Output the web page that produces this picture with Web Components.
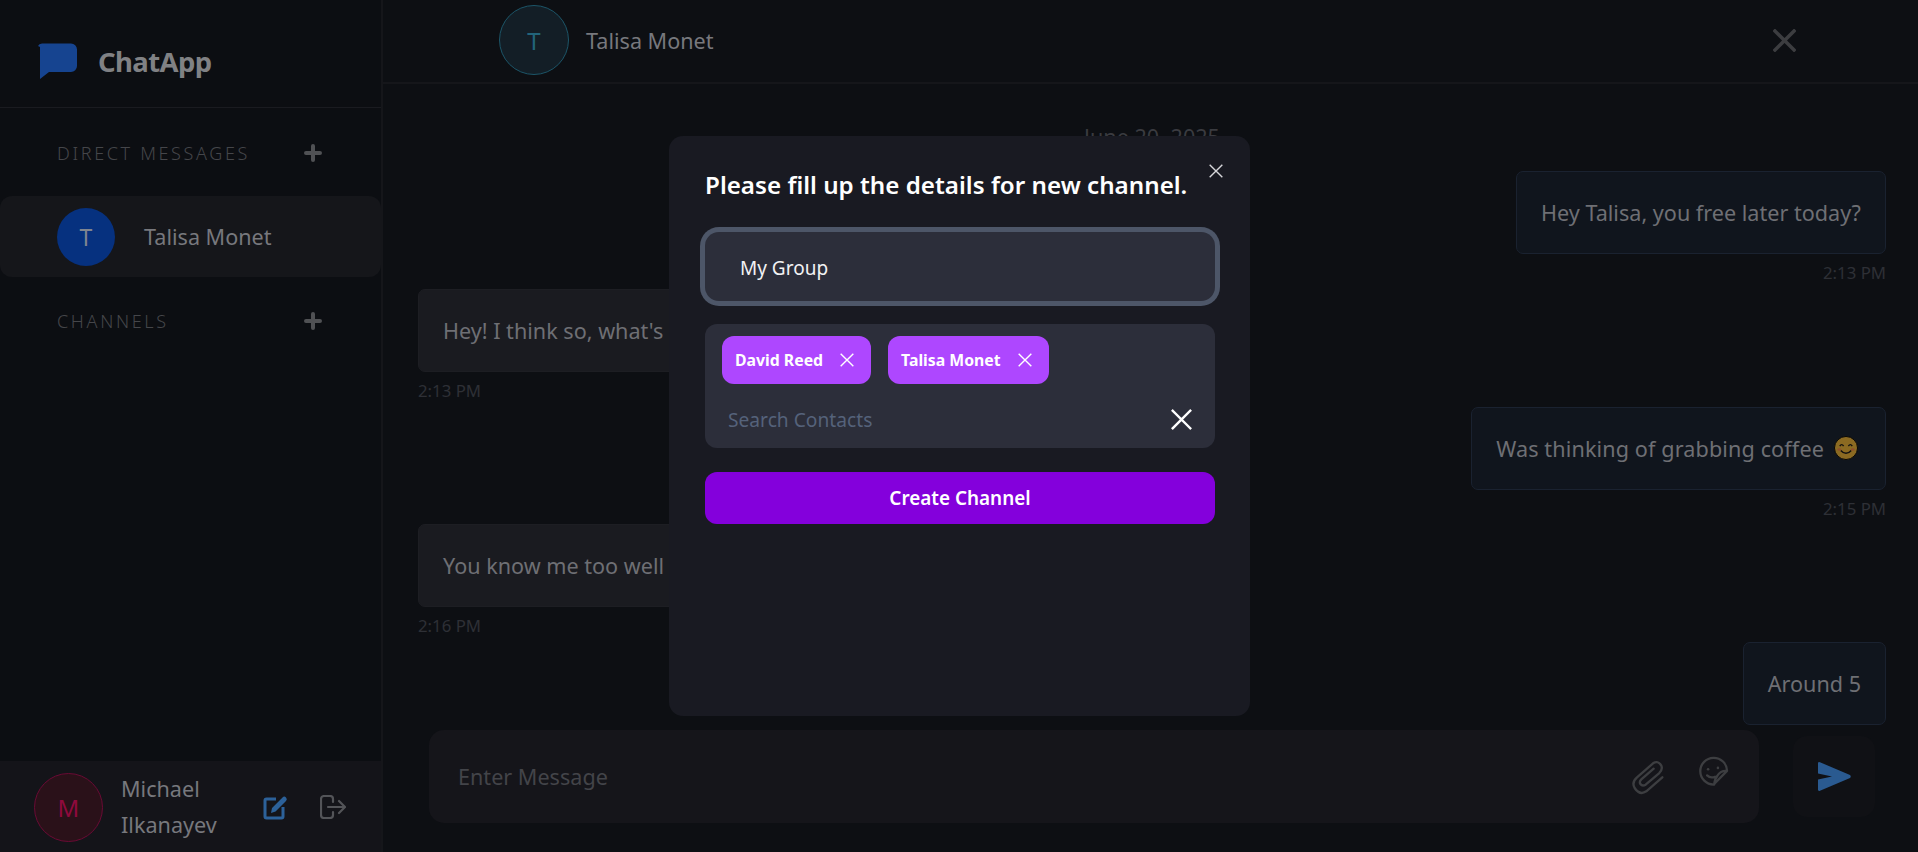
<!DOCTYPE html>
<html lang="en"><head><meta charset="utf-8"><title>ChatApp</title>
<style>
html,body{margin:0;height:852px;overflow:hidden;background:#0d0f13;font-family:"Noto Sans","Open Sans",sans-serif}
</style></head><body>
<chat-app>
  <side-bar slot="side">
    <nav-section label="DIRECT MESSAGES"><contact-row name="Talisa Monet" initial="T"></contact-row></nav-section>
    <nav-section label="CHANNELS"></nav-section>
  </side-bar>
  <chat-pane slot="main">
    <chat-bubble side="sent" time="2:13 PM">Hey Talisa, you free later today?</chat-bubble>
    <chat-bubble side="recv" time="2:13 PM">Hey! I think so, what's</chat-bubble>
    <chat-bubble side="sent" time="2:15 PM"><span style="letter-spacing:.12px">Was thinking of grabbing coffee</span><svg style="margin:0 3px 0 10px" width="24" height="24" viewBox="0 0 25 25"><circle cx="12.5" cy="12.5" r="12" fill="#8b6a22" stroke="#050505" stroke-width="1"/><path d="M6 10.5q2-3 4 0M15 10.5q2-3 4 0M7 15q5.500 6 11 0" fill="none" stroke="#111" stroke-width="1.500"/><ellipse cx="5.500" cy="14" rx="2" ry="1.300" fill="#8f4f2c"/><ellipse cx="19.500" cy="14" rx="2" ry="1.300" fill="#8f4f2c"/></svg></chat-bubble>
    <chat-bubble side="recv" time="2:16 PM">You know me too well</chat-bubble>
    <chat-bubble side="sent" time="">Around 5</chat-bubble>
  </chat-pane>
  <channel-modal slot="modal">
    <contact-chip>David Reed</contact-chip>
    <contact-chip>Talisa Monet</contact-chip>
  </channel-modal>
</chat-app>
<script>
function def(name,html,init){
  customElements.define(name,class extends HTMLElement{
    constructor(){super();this.attachShadow({mode:'open'})}
    connectedCallback(){this.shadowRoot.innerHTML=typeof html==='function'?html(this):html;if(init)init(this)}
  });
}
const xIcon=(s,w,c)=>`<svg width="${s}" height="${s}" viewBox="0 0 24 24" fill="none" stroke="${c}" stroke-width="${w}" stroke-linecap="square"><path d="M2 2 22 22M22 2 2 22"/></svg>`;
const plus=`<svg width="18" height="18" viewBox="0 0 18 18" fill="none" stroke="#505154" stroke-width="4" stroke-linecap="round"><path d="M9 2v14M2 9h14"/></svg>`;

def('chat-app',`<style>
:host{display:flex;width:1918px;height:852px;position:relative;overflow:hidden;background:#0d0f13;color:#808185}
::slotted([slot=side]){flex:0 0 383px}
::slotted([slot=main]){flex:1 1 0;min-width:0}
</style><slot name="side"></slot><slot name="main"></slot><slot name="modal"></slot>`);

def('side-bar',`<style>
:host{display:flex;flex-direction:column;height:852px;box-sizing:border-box;border-right:2px solid #15161a;background:#0c0e12}
.logo{height:108px;box-sizing:border-box;border-bottom:1px solid #1a1b20;display:flex;align-items:center;padding:14px 0 0 38px;gap:21px;flex:none}
.logo b{font:700 27.500px/1 "Noto Sans",sans-serif;color:#808184;letter-spacing:-.6px;margin-top:2px}
.sections{flex:1;padding-top:1px}
.foot{height:91px;flex:none;background:#141419;display:flex;align-items:center;padding:1px 0 0 34px;box-sizing:border-box}
.av{width:69px;height:69px;box-sizing:border-box;border-radius:50%;border:1px solid #6a0a34;background:#2a1119;color:#8f0a3d;font-size:24px;display:flex;align-items:center;justify-content:center}
.nm{width:126px;margin-left:18px;font-size:21.600px;line-height:36px;color:#77787d}
.edit{margin-left:16px;display:block}.out{margin-left:32px;display:block}
</style>
<div class="logo"><svg width="39" height="36" viewBox="0 0 39 36"><path d="M4 0.500H33a6 6 0 0 1 6 6V23a6 6 0 0 1-6 6H11L2 36V4L0 3q1-2.500 4-2.500Z" fill="#164490"/></svg><b>ChatApp</b></div>
<div class="sections"><slot></slot></div>
<div class="foot"><div class="av">M</div><div class="nm">Michael Ilkanayev</div>
<svg class="edit" width="25" height="25" viewBox="0 0 25 25"><path d="M13 4H3.500A1.500 1.500 0 0 0 2 5.500v16A1.500 1.500 0 0 0 3.500 23h15a1.500 1.500 0 0 0 1.500-1.500V12" fill="none" stroke="#2c6199" stroke-width="3"/><path d="M9 13 19.500 2.500q1.800-1.800 3.500 0t0 3.500L12.500 16.500 8 18Z" fill="#2c6199"/></svg>
<svg class="out" width="26" height="24" viewBox="0 0 26 24" fill="none" stroke="#535458" stroke-width="2.200" stroke-linecap="round" stroke-linejoin="round"><path d="M13 7V4a3 3 0 0 0-3-3H4a3 3 0 0 0-3 3v16a3 3 0 0 0 3 3h6a3 3 0 0 0 3-3v-3"/><path d="M8 12H25M19 6l6 6-6 6"/></svg>
</div>`);

def('nav-section',h=>`<style>
:host{display:block}
.h{display:flex;align-items:center;justify-content:space-between;height:87px;box-sizing:border-box;padding:0 59px 0 57px;}
span{font:300 18px/1 "Noto Sans",sans-serif;letter-spacing:2.650px;color:#45464a}
svg{display:block}
</style><div class="h"><span>${h.getAttribute('label')}</span>${plus}</div><slot></slot>`);

def('contact-row',h=>`<style>
:host{display:flex;align-items:center;height:81px;border-radius:12px;background:#15161a;padding-left:57px;gap:29px;margin-right:0}
i{font-style:normal;width:58px;height:58px;border-radius:50%;background:#06317f;color:#7f8590;display:flex;align-items:center;justify-content:center;font-size:23px}
span{font-size:21.600px;color:#77787d}
</style><i>${h.getAttribute('initial')}</i><span>${h.getAttribute('name')}</span>`);

def('chat-pane',`<style>
:host{display:flex;flex-direction:column;height:852px;min-width:0}
header{flex:none;height:84px;box-sizing:border-box;border-bottom:2px solid #15161a;display:flex;align-items:center;padding:0 122px 2px 116px}
.av{width:70px;height:70px;box-sizing:border-box;border-radius:50%;border:1px solid #1c5568;background:#131e26;color:#22647a;font-size:24px;display:flex;align-items:center;justify-content:center}
.nm{margin-left:17px;font-size:21.600px;color:#77787d;flex:1}
.list{flex:1 1 0;min-height:0;overflow:hidden;padding:0 32px 0 35px;display:flex;flex-direction:column}
.date{font-size:21.600px;line-height:28px;color:#3a3b40;text-align:center;margin-top:39px;height:48px;flex:none}
.bar{flex:none;height:122px;box-sizing:border-box;display:flex;padding:0 43px 29px 46px;align-items:center;gap:34px}
.inp{flex:1;height:93px;background:#15151a;border-radius:15px;display:flex;align-items:center;padding:0 30px 0 29px;box-sizing:border-box}
.inp span{flex:1;font-size:21.600px;color:#434449}
.clip{display:block;margin-right:33px;margin-top:2px}.stk{display:block;margin-top:-10px}
.send{width:82px;height:81px;background:#101115;border-radius:14px;display:flex;align-items:center;justify-content:center}
</style>
<header><div class="av">T</div><div class="nm">Talisa Monet</div>${xIcon(23,3.600,'#3c3d40')}</header>
<div class="list"><div class="date">June 20, 2025</div><slot></slot></div>
<div class="bar"><div class="inp"><span>Enter Message</span>
<svg class="clip" width="34" height="35" viewBox="395 178 100 105" fill="none" stroke="#3d3e41" stroke-width="7" stroke-linecap="round"><path d="M488 230 440 272Q420 285 405 262 395 245 412 230L460 188Q475 178 485 195 490 207 478 218L438 252Q428 258 422 250 418 243 425 236L462 204"/></svg>
<svg class="stk" width="31" height="31" viewBox="590 170 95 92" fill="none" stroke="#3d3e41" stroke-width="7" stroke-linejoin="round" stroke-linecap="round"><path d="M679 214A41 41 0 1 0 638 256ZM679 214Q660 212 650 228 640 240 640 256M618 228Q628 238 642 232"/><circle cx="621" cy="209" r="4" fill="#3d3e41" stroke="none"/><circle cx="651" cy="205" r="4" fill="#3d3e41" stroke="none"/></svg>
</div>
<div class="send"><svg width="33" height="29" viewBox="0 0 33 29"><path d="M0 1.500Q0-.5 2 .3L32 13q1.500 1.500 0 3L2 28.700Q0 29.500 0 27.500V17.500L14 14.500 0 11.500Z" fill="#2a5a90"/></svg></div></div>`);

def('chat-bubble',h=>{const s=h.getAttribute('side')==='sent';return `<style>
:host{display:flex;flex-direction:column;align-items:${s?'flex-end':'flex-start'};height:117.800px;flex:none}
.b{box-sizing:border-box;height:83px;display:flex;align-items:center;padding:0 24px;border-radius:7px;font-size:21.600px;white-space:nowrap;
 background:${s?'#10151d':'#1a1b20'};border:1px solid ${s?'#1a2230':'#1d1e23'};color:#6e6f74;${s?'':'min-width:400px'}}
.t{font-size:16.800px;line-height:22px;margin-top:8px;color:#2e3036}
</style><div class="b"><slot></slot></div>${h.getAttribute('time')?`<div class="t">${h.getAttribute('time')}</div>`:''}`});

def('channel-modal',`<style>
:host{position:absolute;left:669px;top:136px;width:581px;height:580px;box-sizing:border-box;background:#191a22;border-radius:14px;padding:33px 35px 0 36px;display:flex;flex-direction:column;color:#fff}
h2{margin:0;font:600 24.200px/32px "Noto Sans",sans-serif;color:#fff;white-space:nowrap}
.x{position:absolute;left:540px;top:28px;display:block}
.name{margin-top:31px;height:69px;flex:none;box-sizing:border-box;background:#2c2e3a;border-radius:14px;box-shadow:0 0 0 5px #4d5668;display:flex;align-items:center;padding:2px 0 0 35px;font-size:19px;color:#f2f2f4}
.box{margin-top:23px;height:124px;flex:none;box-sizing:border-box;background:#2c2e3a;border-radius:12px;padding:12px 23px 0 17px;display:flex;flex-direction:column}
.chips{display:flex;gap:17px}
.search{display:flex;align-items:center;justify-content:space-between;height:60px;margin-top:6px;padding-left:6px}
.search span{font-size:19.200px;color:#55627a}
button{all:unset;box-sizing:border-box;margin-top:24px;height:52px;flex:none;background:#8400dc;border-radius:12px;text-align:center;font:600 18.900px/52px "Noto Sans",sans-serif;color:#fff}
</style>
<svg class="x" width="14" height="14" viewBox="0 0 24 24" fill="none" stroke="#d6d6da" stroke-width="2.400" stroke-linecap="square"><path d="M2 2 22 22M22 2 2 22"/></svg>
<h2>Please fill up the details for new channel.</h2>
<div class="name">My Group</div>
<div class="box"><div class="chips"><slot></slot></div>
<div class="search"><span>Search Contacts</span>${xIcon(21,2.800,'#fff')}</div></div>
<button>Create Channel</button>`);

def('contact-chip',`<style>
:host{display:flex;align-items:center;height:48px;box-sizing:border-box;padding:1px 17px 0 13px;background:#ae47ff;border-radius:12px;font:700 15.800px/1 "Noto Sans",sans-serif;color:#fff;gap:17px}
svg{display:block;margin-top:-1px}
</style><slot></slot><svg width="14" height="14" viewBox="0 0 24 24" fill="none" stroke="#fff" stroke-width="2.400" stroke-linecap="square"><path d="M2 2 22 22M22 2 2 22"/></svg>`);
</script>
</body></html>
